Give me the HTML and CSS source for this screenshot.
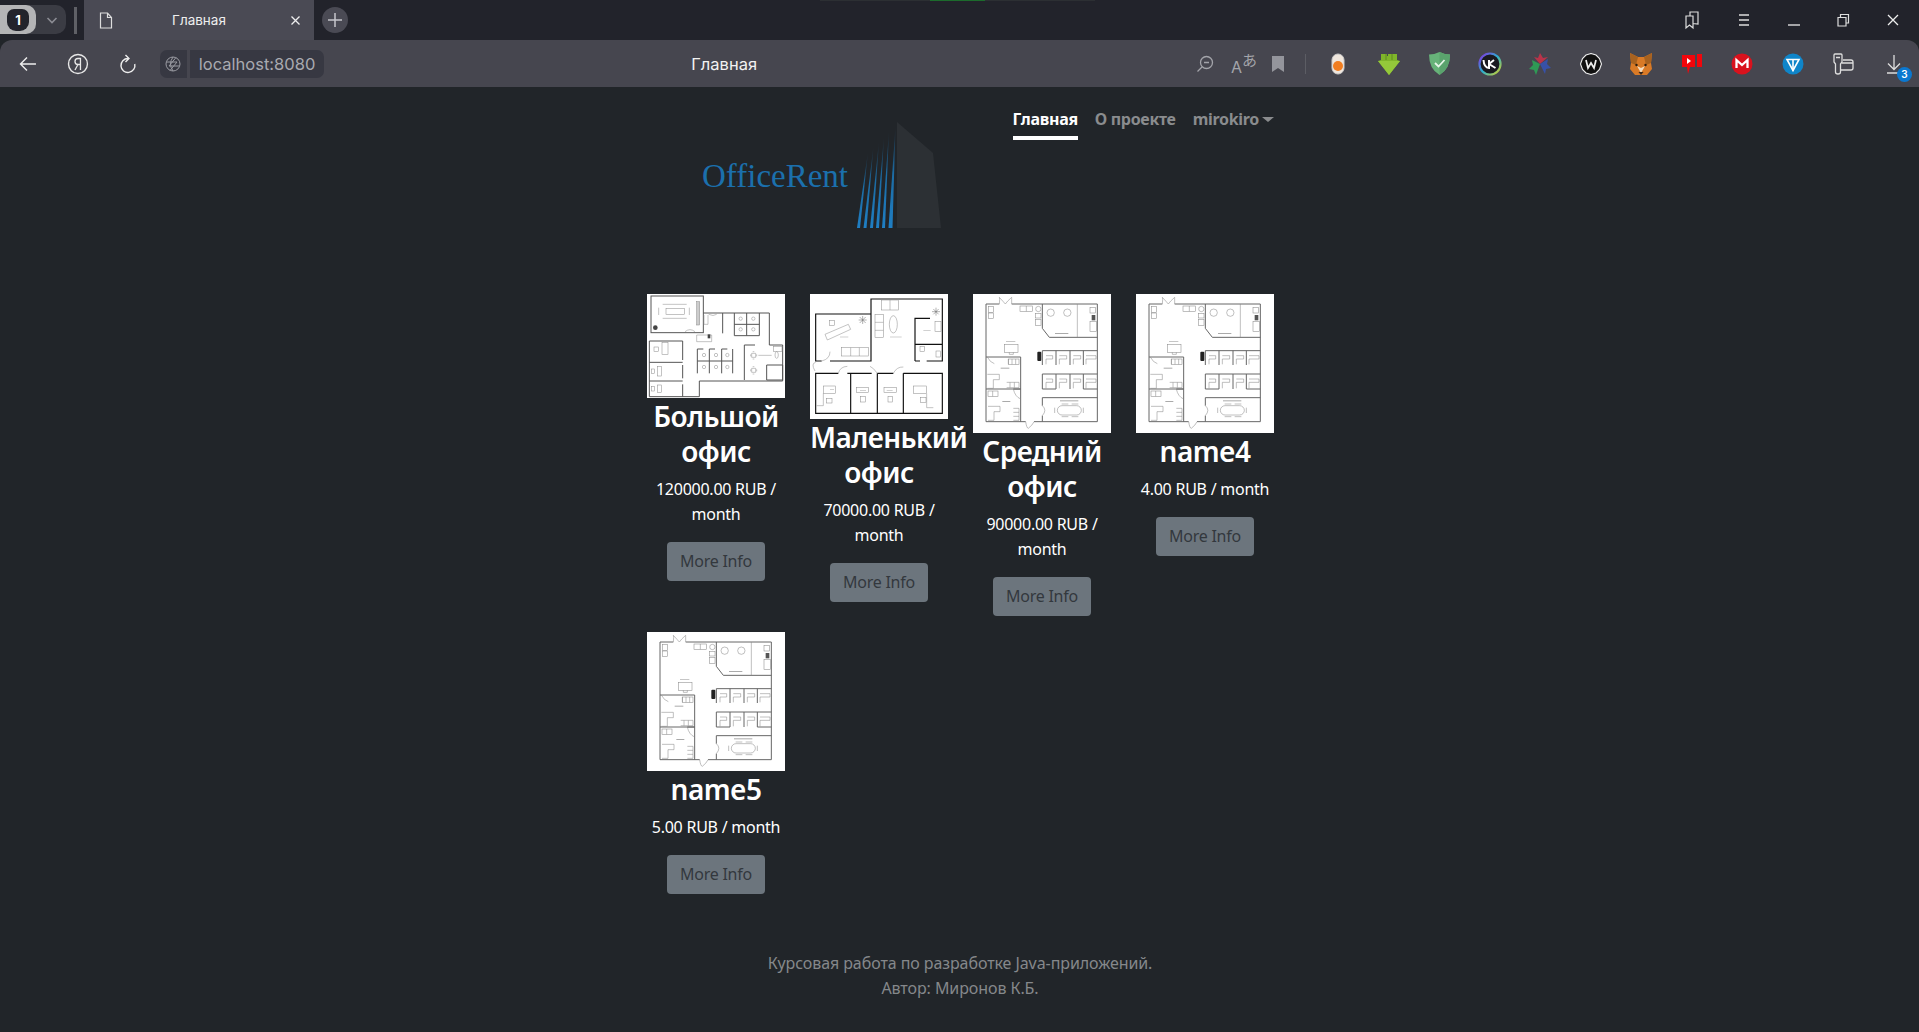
FILE: index.html
```html
<!DOCTYPE html>
<html lang="en">
<head>
    <meta charset="UTF-8">
    <title>Главная</title>
    <link rel="stylesheet" href="styles.css">
</head>
<body>
    <!-- plan used by the last three cards -->
    <svg class="defs" width="0" height="0">
        <symbol id="planC" viewBox="39 27 414 417">
            <rect x="39" y="27" width="414" height="417" fill="#fff"/>
            <g fill="none" stroke="#666" stroke-width="3">
                <path d="M78 57H118M155 57H412V410H222M197 410H78V57"/>
                <path d="M247 57V130L268 157H412M247 197H412M247 197V240M288 197V240M330 197V240M370 197V240"/>
                <path d="M247 267H412M247 267V312H288M288 267V312M330 267V312M370 267V312H412"/>
                <path d="M247 338H412M247 338V362M247 392V410M78 216H182V312H78M182 312V410M160 312H182"/>
            </g>
            <g fill="none" stroke="#888" stroke-width="1.6">
                <path d="M118 57Q120 40 118 37Q130 50 136 57Q142 48 155 37V57M197 410Q200 430 205 430Q218 420 222 410"/>
                <path d="M352 57V157M160 312Q165 335 182 342M82 216Q90 232 103 236M247 362Q262 375 247 392"/>
                <rect x="180" y="63" width="38" height="16"/><path d="M199 63V79"/>
                <rect x="85" y="65" width="15" height="17"/><rect x="85" y="84" width="15" height="17"/>
                <circle cx="235" cy="72" r="8"/><rect x="227" y="85" width="16" height="14"/><rect x="227" y="103" width="16" height="18"/>
                <circle cx="272" cy="83" r="11"/><circle cx="322" cy="83" r="11"/>
                <rect x="390" y="68" width="16" height="16"/><rect x="390" y="110" width="20" height="30"/>
                <rect x="134" y="178" width="40" height="24"/><path d="M148 202V208H160V202"/>
                <rect x="292" y="362" width="72" height="28" rx="14"/>
                <path d="M305 357H325M335 357H355M305 395H325M335 395H355M284 368V384M370 368V384"/>
                <rect x="145" y="222" width="32" height="16"/><path d="M145 222V238M156 222V238M167 222V238"/>
                <path d="M82 268H118V284H100V310H82M140 292H177V308H140M150 292V308M163 292V308"/>
                <rect x="84" y="318" width="30" height="16"/><path d="M98 318V334"/>
                <path d="M84 364H120V380H102V406H84M160 370H177V406H160M160 382H177M160 394H177"/>
                <path d="M258 212H278V222H258V238M298 212H320V222H298V238M340 212H362V222H340V238M378 212H408V222H378V238"/>
                <path d="M258 282H278V292H258V310M298 282H320V292H298V310M340 282H362V292H340V310M378 282H408V292H378V310"/>
            </g>
            <rect x="232" y="200" width="12" height="28" fill="#222" rx="3"/>
            <rect x="395" y="90" width="11" height="16" fill="#555"/>
            <g fill="#aaa"><rect x="285" y="144" width="40" height="3"/><rect x="300" y="346" width="55" height="3"/><rect x="138" y="168" width="28" height="2"/><rect x="122" y="248" width="26" height="3"/><rect x="127" y="348" width="24" height="3"/></g>
        </symbol>
    </svg>

    <div class="tabstrip">
        <div class="tab-counter">
            <span class="tab-counter-num"><span class="hex">1</span></span>
            <svg class="chev" width="14" height="14" viewBox="0 0 14 14"><path d="M2.5 5l4.5 4.5L11.5 5" fill="none" stroke="#8b8c93" stroke-width="1.6"/></svg>
        </div>
        <div class="tab-sep"></div>
        <div class="tab">
            <svg class="tab-file" width="14" height="17" viewBox="0 0 14 17"><path d="M1.5 1h7l4 4.500V16h-11zM8.500 1v4.500h4" fill="none" stroke="#ddd" stroke-width="1.200"/></svg>
            <span class="tab-title">Главная</span>
            <svg width="11" height="11" viewBox="0 0 11 11"><path d="M1.500 1.500l8 8M9.500 1.500l-8 8" stroke="#eee" stroke-width="1.300"/></svg>
        </div>
        <div class="new-tab"><svg width="14" height="14" viewBox="0 0 14 14"><path d="M7 0v14M0 7h14" stroke="#c6c6cb" stroke-width="1.500"/></svg></div>
        <div class="window-btns">
            <svg width="18" height="20" viewBox="0 0 18 20"><path d="M3 6V18l3.500-3 3.500 3V6zM7 6V2h8v12l-5-.5" fill="none" stroke="#ddd" stroke-width="1.200"/></svg>
            <svg width="14" height="14" viewBox="0 0 14 14"><path d="M2 2h10M2 7h10M2 12h10" stroke="#ddd" stroke-width="1.400"/></svg>
            <svg width="14" height="14" viewBox="0 0 14 14"><path d="M1 12h12" stroke="#ddd" stroke-width="1.400"/></svg>
            <svg width="14" height="14" viewBox="0 0 14 14"><path d="M2 4.500h8V13H2zM4.500 4.500V1.500H12.500V10H10" fill="none" stroke="#ddd" stroke-width="1.200"/></svg>
            <svg width="14" height="14" viewBox="0 0 14 14"><path d="M2 2l10 10M12 2L2 12" stroke="#eee" stroke-width="1.300"/></svg>
        </div>
        <div class="load-line"></div>
    </div>

    <div class="toolbar">
        <svg class="tb-back" width="18" height="16" viewBox="0 0 18 16"><path d="M17 8H1.500M8 1.500L1.500 8 8 14.500" fill="none" stroke="#eee" stroke-width="1.400"/></svg>
        <svg class="tb-ya" width="22" height="22" viewBox="0 0 22 22"><circle cx="11" cy="11" r="9.500" fill="none" stroke="#e8e8e8" stroke-width="1.400"/><path d="M13.500 17V5.500H11Q8 5.500 8 8.500T11 11.500H13.500M11 11.500L8 17" fill="none" stroke="#e8e8e8" stroke-width="1.300"/></svg>
        <svg class="tb-reload" width="18" height="20" viewBox="0 0 18 20"><path d="M9 4.500A7 7 0 1 0 15.800 10M6.500 1L10 4.500 6.500 8" fill="none" stroke="#eee" stroke-width="1.400"/></svg>
        <div class="site-btn"><svg width="16" height="16" viewBox="0 0 16 16" fill="none" stroke="#9a9ba2" stroke-width="1"><circle cx="8" cy="8" r="7"/><path d="M1.500 6H12L5 14.500M14.500 10H4L11 1.500M8 1Q3 8 8 15"/></svg></div>
        <div class="url">localhost:8080</div>
        <div class="page-title">Главная</div>
        <div class="tb-tools">
            <svg class="tool-zoom" width="18" height="18" viewBox="0 0 18 18" fill="none" stroke="#a3a4aa" stroke-width="1.300"><circle cx="10.500" cy="7.500" r="6"/><path d="M6 12L1.500 16.500M8 7.500h5"/></svg>
            <span class="tool-tr"><span class="tr-a">A</span><span class="tr-b">あ</span></span>
            <svg class="tool-mark" width="12" height="16" viewBox="0 0 12 16"><path d="M0 0h12v16L6 12 0 16z" fill="#94959c"/></svg>
            <span class="tool-div"></span>
        </div>
        <div class="ext-row">
            <span class="ext"><svg width="14" height="22" viewBox="0 0 14 22"><rect x="1" y="1" width="12" height="20" rx="6" fill="#efe6dd" stroke="#ccc"/><circle cx="7" cy="13" r="5" fill="#f07d20"/></svg></span>
            <span class="ext"><svg width="22" height="22" viewBox="0 0 22 22"><path d="M3 1h6v2h1V1h9v6l3 1-11 14L0 8l3-1z" fill="#7fb52a"/><path d="M0 8h22L11 22z" fill="#94c83a"/><path d="M8 1v6M14 1v6" stroke="#5f8a1e" stroke-width="1"/></svg></span>
            <span class="ext"><svg width="21" height="23" viewBox="0 0 21 23"><path d="M10.500 0Q16 2.500 21 2.500 21 17 10.500 23 0 17 0 2.500 5 2.500 10.500 0z" fill="#67b279"/><path d="M10.500 0Q16 2.500 21 2.500 21 17 10.500 23z" fill="#5aa36d"/><path d="M6 11l3.500 3.500L15.500 8" fill="none" stroke="#e6f5e8" stroke-width="1.800"/></svg></span>
            <span class="ext"><svg width="24" height="24" viewBox="0 0 24 24"><defs><linearGradient id="vkRing" x1="0" y1="0" x2="1" y2="1"><stop offset="0" stop-color="#8a2be2"/><stop offset=".5" stop-color="#2ab0d0"/><stop offset="1" stop-color="#d8d020"/></linearGradient></defs><circle cx="12" cy="12" r="10.500" fill="#1a1a20" stroke="url(#vkRing)" stroke-width="2.200"/><path d="M5.500 8Q6 15.500 11 16V8M11 12L16 8M11 12L17.500 16" fill="none" stroke="#fff" stroke-width="2"/></svg></span>
            <span class="ext"><svg width="22" height="22" viewBox="0 0 22 22"><path d="M11 11L5 4 9 5 11 0 14 5 19 4z" fill="#b8344a"/><path d="M11 11L19 6 18 11 22 15 17 16 16 21z" fill="#3751a8"/><path d="M11 11L3 7 4 12 0 16 5 17 7 22z" fill="#2f9a55"/></svg></span>
            <span class="ext"><svg width="22" height="22" viewBox="0 0 22 22"><path d="M11 .5l5 1.500 3.500 3.500L21.500 11 19.500 16.500 16 20 11 21.500 6 20 2.500 16.500.5 11 2.500 5.500 6 2z" fill="#111" stroke="#eee" stroke-width="1.100"/><path d="M6 7l2 8 3-5 3 5 2-8" fill="none" stroke="#eee" stroke-width="1.700"/></svg></span>
            <span class="ext"><svg width="24" height="24" viewBox="0 0 24 24"><path d="M1 1l8 4h6l8-4-1 10 1 6-5 6H6l-5-6 1-6z" fill="#d97a26"/><path d="M1 1l8 4-2 8-5-2zM23 1l-8 4 2 8 5-2z" fill="#a8621f"/><path d="M8 14l4 7 4-7-4 2z" fill="#f2dcc0"/><path d="M9.500 20h5L12 23z" fill="#33261c"/><circle cx="7.500" cy="13" r="1.200" fill="#2a1d10"/><circle cx="16.500" cy="13" r="1.200" fill="#2a1d10"/></svg></span>
            <span class="ext"><svg width="22" height="22" viewBox="0 0 22 22"><path d="M1 2h13v12H9l-2 7-1-7H1z" fill="#f2060c"/><rect x="16" y="1" width="5" height="13" fill="#f2060c"/><path d="M6 5l4 3-4 3z" fill="#fff"/></svg></span>
            <span class="ext"><svg width="22" height="22" viewBox="0 0 22 22"><circle cx="11" cy="11" r="10.500" fill="#d9121d"/><path d="M5.500 15V7l5.500 5 5.500-5v8" fill="none" stroke="#fff" stroke-width="2.300"/></svg></span>
            <span class="ext"><svg width="22" height="22" viewBox="0 0 22 22"><circle cx="11" cy="11" r="10.500" fill="#0f85c9"/><path d="M5 6.500h12L11 17.500z" fill="none" stroke="#fff" stroke-width="1.600"/><path d="M11 6.500v11" stroke="#fff" stroke-width="1.600"/></svg></span>
            <span class="ext"><svg width="22" height="22" viewBox="0 0 22 22" fill="none" stroke="#ddd" stroke-width="1.300"><path d="M2 2Q2 1 3 1H9Q10 1 10 2V9L8.500 11V19Q8.500 21 6 21T3.500 19V11L2 9zM4 4.500H8"/><path d="M11 7H19Q21 7 21 9V15Q21 17 19 17H9M10 10H21"/></svg></span>
            <span class="ext ext-dl"><svg width="18" height="20" viewBox="0 0 18 20"><path d="M9 1V15M3 9.500L9 15.500 15 9.500M2 19H16" fill="none" stroke="#ddd" stroke-width="1.300"/></svg><span class="dl-badge">3</span></span>
        </div>
    </div>

    <main class="page">
        <header class="site-head">
            <svg class="logo" width="240" height="110" viewBox="0 0 240 110">
                <defs>
                    <linearGradient id="stripe" x1="0" y1="1" x2="0" y2="0">
                        <stop offset="0" stop-color="#1f7fc4"/>
                        <stop offset=".55" stop-color="#1c6ba3"/>
                        <stop offset="1" stop-color="#212529"/>
                    </linearGradient>
                </defs>
                <text class="logo-text" x="0" y="67">OfficeRent</text>
                <path d="M155 108h3l8-76z" fill="url(#stripe)"/>
                <path d="M161.500 108h3l7-82z" fill="url(#stripe)"/>
                <path d="M168 108h3l6-87z" fill="url(#stripe)"/>
                <path d="M174 108h3l5-92z" fill="url(#stripe)"/>
                <path d="M180 108h3l4-98z" fill="url(#stripe)"/>
                <path d="M186.500 108h4l3-102z" fill="url(#stripe)"/>
                <path d="M195 2l36 31 8 75h-44z" fill="#2c3034"/>
            </svg>
            <nav class="site-nav">
                <a class="nav-link active" href="#">Главная</a>
                <a class="nav-link" href="#">О проекте</a>
                <a class="nav-link nav-drop" href="#">mirokiro</a>
            </nav>
        </header>

        <section class="office-grid">
            <article class="office">
                <svg class="plan plan-a" viewBox="21 27 414 312">
                    <rect x="21" y="27" width="414" height="312" fill="#fff"/>
                    <g fill="none" stroke="#555" stroke-width="3">
                        <rect x="33" y="33" width="157" height="110"/>
                        <path d="M190 84H388V180H428V288H178V335H28V168H128V225M128 240V280M128 298V335M28 232H128M28 288H128M248 84V145"/>
                        <path d="M283 84V152H358V84M320 84V152M283 118H358"/>
                        <path d="M172 192V265M208 192V265M245 192V265M278 192V265M172 228H278M172 192H190M208 192H225M245 192H262"/>
                        <path d="M313 180V285M313 180H345M380 240H428V285H380z"/>
                    </g>
                    <g fill="none" stroke="#888" stroke-width="1.500">
                        <rect x="78" y="70" width="55" height="18"/>
                        <path d="M68 58H140M68 100H140M56 68V90M148 68V90"/>
                        <rect x="170" y="50" width="9" height="70" fill="#ccc"/>
                        <path d="M192 90V118H204V90M206 88Q220 95 230 88M170 150H215V170H170z"/>
                        <path d="M135 140Q150 128 165 140"/>
                        <rect x="66" y="172" width="18" height="36"/><rect x="42" y="186" width="14" height="14"/>
                        <rect x="52" y="245" width="12" height="28"/><rect x="34" y="252" width="10" height="14"/>
                        <rect x="52" y="300" width="12" height="22"/><rect x="34" y="304" width="10" height="14"/>
                        <circle cx="302" cy="101" r="5"/><circle cx="340" cy="101" r="5"/><circle cx="302" cy="133" r="5"/><circle cx="340" cy="133" r="5"/>
                        <circle cx="192" cy="210" r="5"/><circle cx="228" cy="210" r="5"/><circle cx="262" cy="210" r="5"/><circle cx="192" cy="246" r="5"/><circle cx="228" cy="246" r="5"/><circle cx="262" cy="246" r="5"/>
                        <path d="M335 205l12 0 0 12-12 0zM338 200h5M338 222h5M332 208v6M350 208v6M335 250h12v12h-12zM338 245h5M338 267h5M332 253v6M350 253v6M355 211H395"/>
                        <ellipse cx="410" cy="210" rx="5" ry="10"/><rect x="400" y="185" width="26" height="14"/>
                    </g>
                    <circle cx="46" cy="128" r="7" fill="#444"/>
                    <rect x="203" y="148" width="8" height="12" fill="#444"/>
                </svg>
                <h3 class="office-name">Большой офис</h3>
                <p class="office-price">120000.00 RUB / month</p>
                <a class="more-btn" href="#">More Info</a>
            </article>

            <article class="office">
                <svg class="plan plan-b" viewBox="510 27 414 375">
                    <rect x="510" y="27" width="414" height="375" fill="#fff"/>
                    <g fill="none" stroke="#111" stroke-width="3.500">
                        <path d="M545 228H527V87H693V42H907V228H860M570 228H693V87M825 228V100H870M825 178H907M825 228H840"/>
                        <path d="M595 265H527V385H907V265H790M760 265H712M695 265H622M632 265V385M712 265V385M790 265V385"/>
                    </g>
                    <g fill="none" stroke="#888" stroke-width="1.500">
                        <path d="M555 148L625 118 632 133 562 165z"/>
                        <rect x="568" y="106" width="16" height="16"/>
                        <rect x="605" y="188" width="80" height="25"/><path d="M632 188V213M658 188V213"/>
                        <rect x="705" y="88" width="25" height="70"/><path d="M705 112H730M705 136H730"/>
                        <rect x="725" y="45" width="50" height="30"/><path d="M750 45V75"/>
                        <ellipse cx="760" cy="118" rx="12" ry="26"/>
                        <path d="M545 228Q570 222 570 200M595 265Q600 245 622 244M712 265Q700 248 690 244M760 265Q770 245 790 246M527 232Q512 235 525 258"/>
                        <rect x="550" y="303" width="36" height="22"/><path d="M550 325V362H530"/><rect x="560" y="340" width="16" height="14"/>
                        <rect x="650" y="308" width="36" height="15"/><rect x="662" y="335" width="14" height="16"/>
                        <rect x="732" y="308" width="38" height="15"/><rect x="744" y="335" width="14" height="16"/>
                        <rect x="820" y="303" width="40" height="22"/><path d="M860 325V368H880"/><rect x="842" y="338" width="16" height="14"/>
                        <rect x="885" y="110" width="18" height="30"/><rect x="840" y="185" width="14" height="14"/><rect x="888" y="198" width="14" height="18"/>
                    </g>
                    <g stroke="#666" stroke-width="1.500"><path d="M656 105H680M668 93V117M659 96L677 114M677 96L659 114M876 80H900M888 68V92M880 72L896 88M896 72L880 88"/></g>
                    <g fill="#bbb"><rect x="600" y="155" width="25" height="2"/><rect x="750" y="155" width="35" height="2"/><rect x="850" y="135" width="22" height="2"/><rect x="570" y="312" width="12" height="2"/><rect x="660" y="315" width="18" height="2"/><rect x="740" y="315" width="18" height="2"/></g>
                </svg>
                <h3 class="office-name">Маленький офис</h3>
                <p class="office-price">70000.00 RUB / month</p>
                <a class="more-btn" href="#">More Info</a>
            </article>

            <article class="office">
                <svg class="plan plan-c"><use href="#planC"/></svg>
                <h3 class="office-name">Средний офис</h3>
                <p class="office-price">90000.00 RUB / month</p>
                <a class="more-btn" href="#">More Info</a>
            </article>

            <article class="office">
                <svg class="plan plan-c"><use href="#planC"/></svg>
                <h3 class="office-name">name4</h3>
                <p class="office-price">4.00 RUB / month</p>
                <a class="more-btn" href="#">More Info</a>
            </article>

            <article class="office">
                <svg class="plan plan-c"><use href="#planC"/></svg>
                <h3 class="office-name">name5</h3>
                <p class="office-price">5.00 RUB / month</p>
                <a class="more-btn" href="#">More Info</a>
            </article>
        </section>

        <footer class="site-foot">
            <p>Курсовая работа по разработке Java-приложений.</p>
            <p>Автор: Миронов К.Б.</p>
        </footer>
    </main>
</body>
</html>
```

FILE: styles.css
```css
html, body {
    margin: 0;
    height: 100%;
    overflow: hidden;
}
body {
    background-color: #212529;
    color: #fff;
    font-family: "Noto Sans", "Open Sans", sans-serif;
}
.defs {
    display: block;
    height: 0;
}

/* browser chrome */
.tabstrip {
    position: relative;
    display: flex;
    align-items: center;
    height: 40px;
    background-color: #22232b;
    font-family: Inter, "Noto Sans", sans-serif;
}
.tab-counter {
    display: flex;
    align-items: center;
    width: 66px;
    height: 29px;
    margin-top: -1px;
    border-radius: 0 10px 10px 0;
    background-color: #3b3c44;
}
.tab-counter-num {
    display: flex;
    align-items: center;
    justify-content: center;
    width: 36px;
    height: 29px;
    border-radius: 0 10px 10px 0;
    background-color: #b4b4b6;
}
.hex {
    width: 22px;
    height: 22px;
    border-radius: 7px 7px 9px 9px;
    background-color: #22232b;
    color: #fff;
    font-size: 13px;
    font-weight: 700;
    line-height: 22px;
    text-align: center;
}
.chev {
    margin-left: 9px;
}
.tab-sep {
    width: 3px;
    height: 27px;
    margin-left: 8px;
    background-color: #5f6066;
}
.tab {
    display: flex;
    align-items: center;
    width: 230px;
    height: 40px;
    margin-left: 7px;
    padding: 0 13px 0 15px;
    box-sizing: border-box;
    background-color: #4a4a54;
}
.tab-title {
    flex: 1;
    padding-right: 5px;
    font-size: 13.500px;
    text-align: center;
    color: #eee;
}
.new-tab {
    display: flex;
    align-items: center;
    justify-content: center;
    width: 26px;
    height: 26px;
    margin-left: 8px;
    border-radius: 50%;
    background-color: #4a4a54;
}
.window-btns {
    display: flex;
    align-items: center;
    justify-content: space-between;
    width: 217px;
    margin-left: auto;
    margin-right: 19px;
}
.load-line {
    position: absolute;
    top: 0;
    left: 820px;
    width: 275px;
    height: 1px;
    background: linear-gradient(90deg, #2c2f33 40%, #1c6b2c 40%, #1c6b2c 60%, #2c2f33 60%);
}
.toolbar {
    display: flex;
    align-items: center;
    position: relative;
    height: 47px;
    border-radius: 12px 12px 0 0;
    background-color: #46464f;
    font-family: Inter, "Noto Sans", sans-serif;
}
.tb-back {
    margin-left: 19px;
}
.tb-ya {
    margin-left: 30px;
}
.tb-reload {
    margin-left: 30px;
}
.site-btn {
    display: flex;
    align-items: center;
    justify-content: center;
    width: 27px;
    height: 28px;
    margin-left: 23px;
    border-radius: 7px 0 0 7px;
    background-color: #373842;
}
.url {
    width: 135px;
    height: 28px;
    margin-left: 3px;
    border-radius: 0 7px 7px 0;
    background-color: #373842;
    color: #a9aab0;
    font-size: 16.500px;
    line-height: 28px;
    text-align: center;
}
.page-title {
    width: 160px;
    margin-left: 320px;
    font-size: 16.500px;
    text-align: center;
    color: #f2f2f2;
}
.tb-tools {
    display: flex;
    align-items: center;
    margin-left: 392px;
}
.tool-zoom {
    margin-right: 17px;
}
.tool-tr {
    position: relative;
    width: 26px;
    height: 22px;
    margin-right: 15px;
    color: #a3a4aa;
}
.tr-a {
    position: absolute;
    left: 0;
    bottom: -2px;
    font-size: 16px;
}
.tr-b {
    position: absolute;
    right: 0;
    top: -4px;
    font-family: "Noto Sans CJK JP", sans-serif;
    font-size: 15px;
}
.tool-mark {
    margin-right: 21px;
}
.tool-div {
    width: 1px;
    height: 20px;
    background-color: #5c5d64;
}
.ext-row {
    display: flex;
    align-items: center;
    margin-left: 7px;
}
.ext {
    position: relative;
    display: flex;
    align-items: center;
    justify-content: center;
    width: 50.500px;
    height: 30px;
}
.dl-badge {
    position: absolute;
    right: 7px;
    top: 18px;
    width: 15px;
    height: 15px;
    border-radius: 50%;
    background-color: #0b78d0;
    color: #fff;
    font-size: 10px;
    font-weight: 600;
    line-height: 15px;
    text-align: center;
}

/* site */
.site-head {
    display: flex;
    align-items: flex-start;
    width: 627px;
    height: 207px;
    margin-left: 647px;
}
.logo {
    margin-top: 33px;
    margin-left: 55px;
}
.logo-text {
    fill: #1b70ad;
    font-family: "Liberation Serif", serif;
    font-size: 33px;
}
.site-nav {
    display: flex;
    gap: 17px;
    margin-top: 20px;
    margin-left: auto;
}
.nav-link {
    height: 24px;
    padding-bottom: 5px;
    border-bottom: 4px solid transparent;
    color: #8a8c8e;
    font-size: 16px;
    font-weight: 700;
    letter-spacing: -0.300px;
    line-height: 24px;
    text-decoration: none;
}
.nav-link.active {
    color: #fff;
    border-bottom-color: #fff;
}
.nav-drop::after {
    content: "";
    display: inline-block;
    margin-left: 3px;
    vertical-align: 3px;
    border-top: 5px solid #8a8c8e;
    border-left: 6px solid transparent;
    border-right: 6px solid transparent;
}
.office-grid {
    display: flex;
    flex-wrap: wrap;
    align-items: flex-start;
    width: 652px;
    margin-left: 634.500px;
}
.office {
    width: 138px;
    padding: 0 12.500px 16px;
    text-align: center;
}
.plan {
    display: block;
    width: 138px;
}
.plan-a {
    height: 104px;
}
.plan-b {
    height: 125px;
}
.plan-c {
    height: 139px;
}
.office-name {
    margin: 1px 0 8px;
    font-size: 28px;
    font-weight: 600;
    letter-spacing: -0.550px;
    line-height: 35px;
}
.office-price {
    margin: 0 0 15px;
    font-size: 16px;
    letter-spacing: -0.250px;
    line-height: 25px;
}
.more-btn {
    display: inline-block;
    padding: 0 13px;
    border-radius: 4px;
    background-color: #6c757d;
    color: #33383d;
    font-size: 16px;
    letter-spacing: -0.250px;
    line-height: 39px;
    text-decoration: none;
}
.site-foot {
    margin-top: 41px;
    padding-left: 1px;
    color: #85888b;
    font-size: 16px;
    letter-spacing: -0.080px;
    line-height: 25px;
    text-align: center;
}
.site-foot p {
    margin: 0;
}
```
